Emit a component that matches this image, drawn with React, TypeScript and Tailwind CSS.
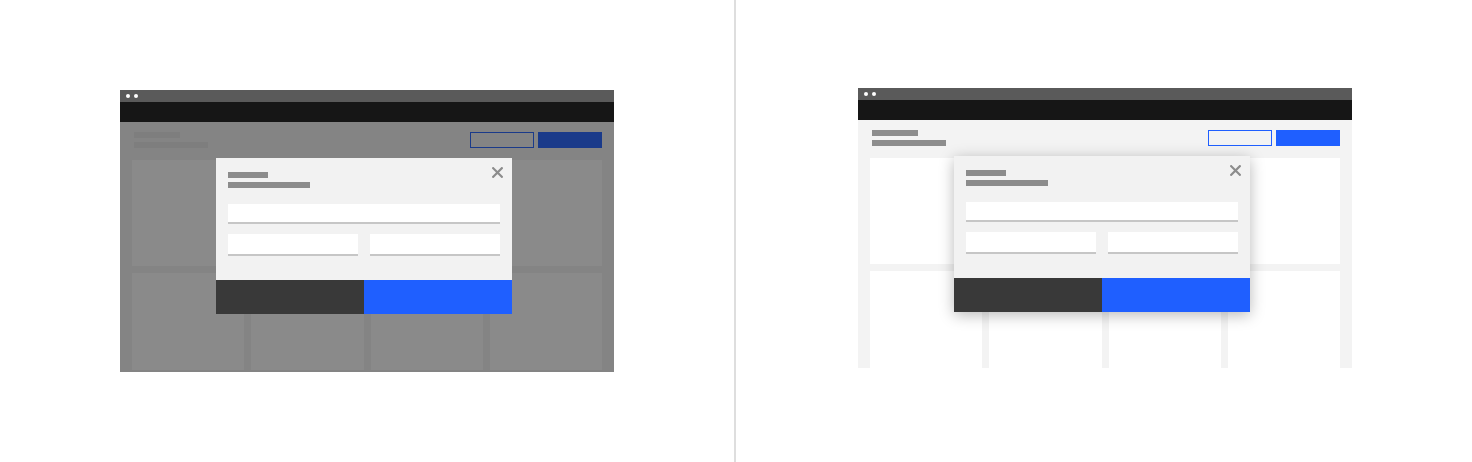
import React from "react";

type MockupProps = {
  dimmed?: boolean;
};

function CloseIcon() {
  return (
    <svg width="11" height="11" viewBox="0 0 11 11" className="block">
      <path
        d="M1.2 1.2 L9.8 9.8 M9.8 1.2 L1.2 9.8"
        stroke="#8c8c8c"
        strokeWidth="2.2"
        strokeLinecap="square"
        fill="none"
      />
    </svg>
  );
}

function Modal({ shadow }: { shadow?: boolean }) {
  return (
    <div
      className={`absolute left-[96px] top-[36px] w-[296px] flex flex-col bg-[#f2f2f2] ${
        shadow ? "shadow-[0_3px_14px_rgba(0,0,0,0.28)]" : ""
      }`}
    >
      {/* Close */}
      <div className="absolute right-[9px] top-[9px]">
        <CloseIcon />
      </div>

      <div className="px-3 pt-[14px]">
        {/* Title */}
        <div className="w-[40px] h-[6px] bg-[#8c8c8c]" />
        <div className="mt-[4px] w-[82px] h-[6px] bg-[#8c8c8c]" />

        {/* Fields */}
        <div className="mt-[16px] h-[20px] bg-white border-b-2 border-[#c6c6c6]" />
        <div className="mt-[10px] flex gap-3">
          <div className="flex-1 h-[22px] bg-white border-b-2 border-[#c6c6c6]" />
          <div className="flex-1 h-[22px] bg-white border-b-2 border-[#c6c6c6]" />
        </div>
      </div>

      {/* Footer */}
      <div className="mt-[24px] flex h-[34px]">
        <div className="flex-1 bg-[#393939]" />
        <div className="flex-1 bg-[#1f5fff]" />
      </div>
    </div>
  );
}

function Mockup({ dimmed }: MockupProps) {
  return (
    <div className="w-[494px] flex flex-col">
      {/* Window bar */}
      <div className="h-[12px] bg-[#5a5a5a] flex items-center gap-[4px] pl-[6px]">
        <div className="w-[4px] h-[4px] rounded-full bg-white" />
        <div className="w-[4px] h-[4px] rounded-full bg-white" />
      </div>
      <div className="h-[20px] bg-[#161616]" />

      {/* Content */}
      <div
        className={`relative overflow-hidden bg-[#f3f3f3] px-3 pt-[10px] ${
          dimmed ? "h-[250px] pb-[2px]" : "h-[248px]"
        }`}
      >
        <div className="flex flex-col h-full">
          <div className="flex justify-between">
            <div className="pl-[2px]">
              <div
                className={`w-[46px] h-[6px] ${
                  dimmed ? "bg-[#e6e6e6]" : "bg-[#8d8d8d]"
                }`}
              />
              <div
                className={`mt-[4px] w-[74px] h-[6px] ${
                  dimmed ? "bg-[#e6e6e6]" : "bg-[#8d8d8d]"
                }`}
              />
            </div>
            <div className="flex gap-[4px]">
              <div className="w-[64px] h-[16px] border border-[#1f5fff]" />
              <div className="w-[64px] h-[16px] bg-[#1f5fff]" />
            </div>
          </div>

          <div className="mt-3 flex-1 grid grid-cols-4 grid-rows-[106px_1fr] gap-[7px]">
            {Array.from({ length: 8 }).map((_, i) => (
              <div key={i} className="bg-white" />
            ))}
          </div>
        </div>

        {dimmed && (
          <div className="absolute inset-0 bg-[rgba(22,22,22,0.5)]" />
        )}

        <Modal shadow={!dimmed} />
      </div>
    </div>
  );
}

export default function App() {
  return (
    <div className="w-[1472px] h-[462px] bg-white flex">
      <div className="w-[734px] flex justify-center pt-[90px]">
        <Mockup dimmed />
      </div>
      <div className="w-[2px] h-full bg-[#dedede]" />
      <div className="w-[736px] flex pl-[122px] pt-[88px]">
        <Mockup />
      </div>
    </div>
  );
}
